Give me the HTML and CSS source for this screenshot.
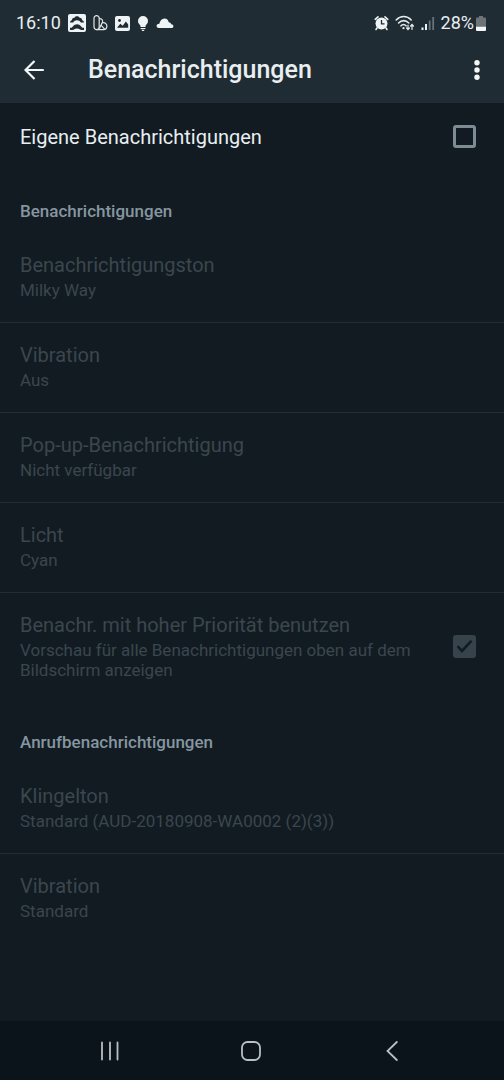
FILE: index.html
```html
<!DOCTYPE html>
<html lang="de">
<head>
<meta charset="utf-8">
<meta name="viewport" content="width=device-width, initial-scale=1">
<title>Benachrichtigungen</title>
<link rel="stylesheet" href="styles.css">
</head>
<body>
<div class="screen">
  <header class="top">
    <div class="status">
      <div class="status-left">
        <span class="clock">16:10</span>
        <svg width="18" height="18" viewBox="0 0 18 18"><rect width="18" height="18" rx="2" fill="#eef3f5"/><path d="M2 8.500c.2-1.400.9-2 1.800-2.200.2-1.800 1.400-2.600 2.600-2.500C7.200 2.600 8 2.200 9 2.200s1.900.4 2.600 1.600c1.300-.1 2.400.7 2.600 2.500.9.200 1.600.8 1.800 2.200h-3.200C12 7 10.600 6.300 9 6.300S6 7 5.200 8.500z" fill="#202c33"/><path d="M2 13.700c2.200.2 2.300-.6 3-1.500C6 10.900 7.400 10.200 9 10.200s3 .7 4 2c.7.9.8 1.700 3 1.500V16h-2.400c-1.600 0-2.300-1.600-4.600-1.600S6 16 4.400 16H2z" fill="#202c33"/></svg>
        <svg width="15" height="18" viewBox="0 0 15 18" fill="none" stroke="#dfe6e9" stroke-width="1.200" stroke-linejoin="round"><rect x="1" y="1.600" width="5.200" height="14" rx="2.600"/><path d="M6.200 4.600c2.200-.4 3.900 1.300 3.300 3.400L6.400 14.400"/><path d="M9.200 9c2.200-.9 4.700.6 4.700 3 0 2-1.500 3.600-3.500 3.600H3.600"/><path d="M8 11.200l3.600 3.900"/></svg>
        <svg width="15" height="15" viewBox="0 0 15 15"><rect width="15" height="15" rx="2" fill="#eef3f5"/><path d="M2 11.800l3.300-4 2.400 2 3.200-4.300 2.300 3v3.300z" fill="#202c33"/><circle cx="4.500" cy="4.500" r="1.400" fill="#202c33"/></svg>
        <svg width="12" height="17" viewBox="0 0 12 17" fill="#eef3f5"><path d="M6 1a5 5 0 0 1 5 5c0 2.300-1.200 3.100-2.400 4.400V12H3.400v-1.600C2.200 9.100 1 8.300 1 6a5 5 0 0 1 5-5zM3.600 13h4.800v1H3.600zM4.300 14.700h3.400L6.800 16H5.200z"/></svg>
        <svg width="18" height="12" viewBox="0 0 18 12" fill="#eef3f5"><path d="M3 11C1.500 11 .6 10.200.6 9c0-1.300 1.200-2.200 2.700-2.200C4 3.800 5.800 1.500 8.400 1.500c2.400 0 4 1.500 4.300 3.700 1.600.2 2.300 1 2.500 2.100 1.500.1 2.200.9 2.200 1.900s-.7 1.800-1.900 1.800z"/></svg>
      </div>
      <div class="status-right">
        <svg width="15" height="16" viewBox="0 0 15 16"><path d="M1.200 4.300L4 1.800M13.800 4.300L11 1.800M3 13l-1 1.500M12 13l1 1.500" stroke="#eef3f5" stroke-width="1.600" stroke-linecap="round"/><circle cx="7.500" cy="8.500" r="6" fill="#eef3f5"/><path d="M7.500 5v3.800h3" fill="none" stroke="#202c33" stroke-width="1.300"/></svg>
        <svg width="20" height="16" viewBox="0 0 20 16" fill="none" stroke="#e4eaed" stroke-width="1.600" stroke-linecap="round"><path d="M1.200 5c4.300-4.600 10.700-4.600 15 0M3.600 8c3-3.200 7.200-3.200 10.200 0M6 10.800c1.600-1.800 3.400-1.800 5 0"/><circle cx="8.500" cy="13.200" r="1.100" fill="#e4eaed" stroke="none"/><path d="M13 10v4.400M11.600 13l1.400 1.600 1.400-1.600M17 14.400V9.600M15.600 11L17 9.400l1.400 1.600" stroke-width="1.200"/></svg>
        <svg width="14" height="15" viewBox="0 0 14 15"><path d="M.5 11.500h2V14h-2zM4 8h2v6H4z" fill="#eef3f5"/><path d="M7.800 4.500h1.800V14H7.800zM11.300 1h1.800v13h-1.800z" fill="#66727a"/></svg>
        <span class="percent">28%</span>
        <svg width="10" height="15" viewBox="0 0 10 15"><path d="M3 0h4v1.500h2q1 0 1 1V11H0V2.500q0-1 1-1h2z" fill="#6d7478"/><path d="M0 10.800h10V14q0 1-1 1H1q-1 0-1-1z" fill="#f4f7f8"/></svg>
      </div>
    </div>
    <div class="appbar">
      <button class="icon-btn" type="button" aria-label="Zurück"><svg width="20" height="20" viewBox="0 0 20 20" fill="none" stroke="#f4f7f8" stroke-width="2.200"><path d="M19.800 10H1.800M10.500 1L1.500 10l9 9"/></svg></button>
      <h1>Benachrichtigungen</h1>
      <button class="icon-btn" type="button" aria-label="Weitere Optionen"><svg width="6" height="20" viewBox="0 0 6 20" fill="#f4f7f8"><circle cx="3" cy="2.700" r="2.700"/><circle cx="3" cy="10" r="2.700"/><circle cx="3" cy="17.300" r="2.700"/></svg></button>
    </div>
  </header>

  <main>
    <label class="custom"><span>Eigene Benachrichtigungen</span><input class="check" type="checkbox"></label>

    <section>
      <h2>Benachrichtigungen</h2>
      <div class="row"><span class="name">Benachrichtigungston</span><span class="value">Milky Way</span></div>
      <div class="row"><span class="name">Vibration</span><span class="value">Aus</span></div>
      <div class="row"><span class="name">Pop-up-Benachrichtigung</span><span class="value">Nicht verfügbar</span></div>
      <div class="row"><span class="name">Licht</span><span class="value">Cyan</span></div>
      <label class="row row-check">
        <span class="texts"><span class="name">Benachr. mit hoher Priorität benutzen</span><span class="value">Vorschau für alle Benachrichtigungen oben auf dem Bildschirm anzeigen</span></span>
        <input class="check" type="checkbox" checked disabled>
      </label>
    </section>

    <section>
      <h2>Anrufbenachrichtigungen</h2>
      <div class="row"><span class="name">Klingelton</span><span class="value">Standard (AUD-20180908-WA0002 (2)(3))</span></div>
      <div class="row"><span class="name">Vibration</span><span class="value">Standard</span></div>
    </section>
  </main>

  <nav class="navbar">
    <button type="button" aria-label="Letzte Apps"><svg width="20" height="20" viewBox="0 0 20 20" stroke="#b9bfc4" stroke-width="1.800" stroke-linecap="round"><path d="M2 1.500v17M10 1.500v17M17.500 1.500v17"/></svg></button>
    <button type="button" aria-label="Startseite"><svg width="20" height="20" viewBox="0 0 20 20" fill="none" stroke="#b9bfc4" stroke-width="1.800"><rect x="1" y="1" width="18" height="18" rx="5.500"/></svg></button>
    <button type="button" aria-label="Zurück"><svg width="12" height="20" viewBox="0 0 12 20" fill="none" stroke="#b9bfc4" stroke-width="1.800" stroke-linecap="round"><path d="M10.800 1L1.500 10l9.300 9"/></svg></button>
  </nav>
</div>
</body>
</html>
```
FILE: styles.css
```css
* { box-sizing: border-box; }
body {
  margin: 0;
  background: #121b22;
  color: #e9eef1;
  font-family: Roboto, "Noto Sans", sans-serif;
}
.screen { min-height: 100vh; display: flex; flex-direction: column; }
button { border: 0; padding: 0; background: none; display: flex; align-items: center; justify-content: center; }
svg { display: block; flex: none; }

.top { background: #202c33; }
.status { display: flex; justify-content: space-between; padding: 10px 18px 0 16px; }
.status-left, .status-right { display: flex; align-items: center; height: 26px; }
.status-left { gap: 7px; }
.status-right { gap: 6px; }
.clock, .percent { font-size: 18px; line-height: 24px; }
.percent + svg { margin-left: -4px; }
.appbar { display: flex; align-items: center; height: 67px; padding: 0 12px 0 19px; }
.icon-btn { width: 30px; height: 40px; }
h1 { flex: 1; margin: 0 0 0 39px; font-size: 25px; line-height: 32px; font-weight: 500; }

main { flex: 1; }
.custom { display: flex; align-items: center; justify-content: space-between; height: 67px; padding: 0 28px 0 20px; font-size: 20px; line-height: 24px; }
h2 { margin: 0; padding: 31px 20px 12px; font-size: 17px; line-height: 20px; font-weight: 500; color: #8696a0; }
.row { display: flex; flex-direction: column; gap: 2px; padding: 20px 20px 22px; border-bottom: 1px solid #222d34; color: #3b464d; }
.row:last-child { border-bottom: 0; padding-bottom: 21px; }
.row-check { flex-direction: row; align-items: center; justify-content: space-between; gap: 24px; padding-right: 28px; }
.texts { display: flex; flex-direction: column; gap: 2px; flex: 1; }
.name { font-size: 20px; line-height: 25px; }
.value { font-size: 17px; line-height: 20px; }

.check { appearance: none; flex: none; width: 23px; height: 23px; margin: 0; border: 3px solid #7d8b95; border-radius: 3px; display: grid; place-items: center; }
.check:disabled { border-color: #36434b; background: #36434b; }
.check:checked::before { content: ""; width: 16px; height: 13px; background: #121b22; clip-path: polygon(0 52%, 12% 40%, 34% 70%, 88% 0, 100% 12%, 34% 100%); }

.navbar { display: flex; align-items: center; height: 59px; background: #0b141a; padding: 0 42px 0 39px; }
.navbar button { flex: 1; height: 48px; }
```
